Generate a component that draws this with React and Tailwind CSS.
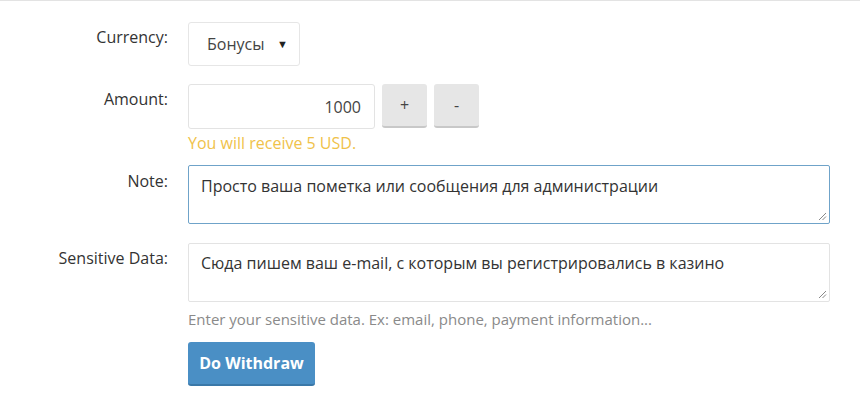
const labelCls =
  "w-[168px] shrink-0 text-right text-[16px] text-[#333]";

function Row({ label, labelPad = "pt-[6px]", className = "", children }) {
  return (
    <div className={"flex " + className}>
      <div className={labelCls + " " + labelPad}>{label}</div>
      <div className="ml-5 flex-1">{children}</div>
    </div>
  );
}

function Grip() {
  return (
    <svg
      className="absolute bottom-[2px] right-[2px]"
      width="9"
      height="9"
      viewBox="0 0 9 9"
    >
      <path d="M1 8L8 1M4.5 8L8 4.5" stroke="#888" strokeWidth="1" />
    </svg>
  );
}

export default function App() {
  return (
    <div
      className="h-[407px] w-[860px] overflow-hidden border-t border-[#e3e3e3] bg-white pt-[21px]"
      style={{ fontFamily: '"Open Sans", "Noto Sans", sans-serif' }}
    >
      <Row label="Currency:" labelPad="pt-[3px]">
        <div className="flex h-[44px] w-[112px] items-center justify-between rounded-[3px] border border-[#e6e6e6] pl-[18px] pr-[11px] text-[16px] text-[#444]">
          <span>Бонусы</span>
          <span className="text-[11px] text-[#222]">▼</span>
        </div>
      </Row>

      <Row label="Amount:" labelPad="pt-[3px]" className="mt-[18px]">
        <div className="flex items-start gap-[7px]">
          <div className="flex h-[45px] w-[187px] items-center justify-end rounded-[3px] border border-[#e3e3e3] pr-[13px] text-[16px] text-[#444]">
            1000
          </div>
          <button className="h-[44px] w-[45px] rounded-[3px] border-b-2 border-[#c8c8c8] bg-[#e6e6e6] text-[16px] text-[#444]">
            +
          </button>
          <button className="h-[44px] w-[45px] rounded-[3px] border-b-2 border-[#c8c8c8] bg-[#e6e6e6] text-[16px] text-[#444]">
            -
          </button>
        </div>
        <div className="mt-[4px] text-[16px] leading-[21px] text-[#f0c24a]">
          You will receive 5 USD.
        </div>
      </Row>

      <Row label="Note:" labelPad="pt-[4px]" className="mt-[11px]">
        <div className="relative h-[59px] w-[642px] rounded-[2px] border border-[#6fa3c9] px-[12px] pt-[8px] text-[16px] text-[#333]">
          Просто ваша пометка или сообщения для администрации
          <Grip />
        </div>
      </Row>

      <Row label="Sensitive Data:" labelPad="pt-[3px]" className="mt-[19px]">
        <div className="relative h-[59px] w-[642px] rounded-[2px] border border-[#e3e3e3] px-[12px] pt-[7px] text-[16px] text-[#333]">
          Сюда пишем ваш e-mail, с которым вы регистрировались в казино
          <Grip />
        </div>
        <div className="mt-[6px] text-[15px] text-[#8a8a8a]">
          Enter your sensitive data. Ex: email, phone, payment information...
        </div>
        <button className="mt-[11px] h-[44px] w-[127px] rounded-[3px] border-b-2 border-[#3a78a8] bg-[#4a8fc5] text-[16px] font-bold text-white">
          Do Withdraw
        </button>
      </Row>
    </div>
  );
}
